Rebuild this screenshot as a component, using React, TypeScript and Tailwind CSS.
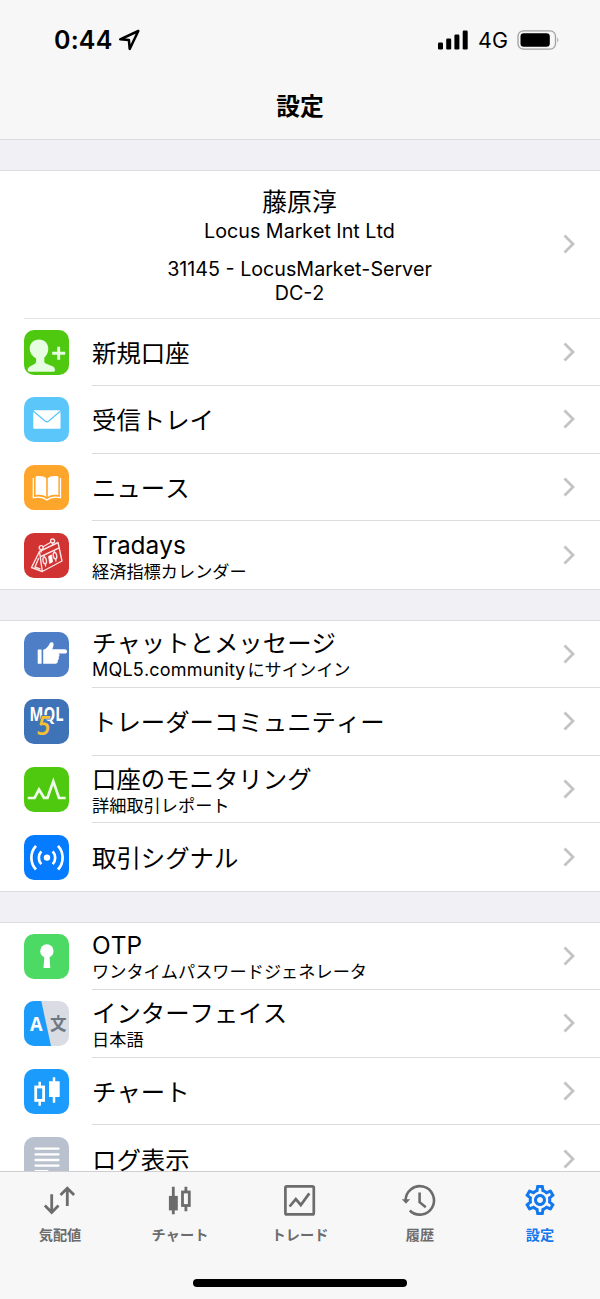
import type { ReactNode } from "react";
import { MdOutlineSettings } from "react-icons/md";

type Item = {
  title: string;
  subtitle?: ReactNode;
  icon: ReactNode;
};

const accountItems: Item[] = [
  { title: "新規口座", icon: <NewAccountIcon /> },
  { title: "受信トレイ", icon: <MailIcon /> },
  { title: "ニュース", icon: <NewsIcon /> },
  { title: "Tradays", subtitle: "経済指標カレンダー", icon: <TradaysIcon /> },
];

const communityItems: Item[] = [
  {
    title: "チャットとメッセージ",
    subtitle: (
      <>
        <span className="mr-[2px] text-[18px] tracking-[0.2px]">MQL5.community</span>
        にサインイン
      </>
    ),
    icon: <ChatIcon />,
  },
  { title: "トレーダーコミュニティー", icon: <MqlIcon /> },
  { title: "口座のモニタリング", subtitle: "詳細取引レポート", icon: <MonitorIcon /> },
  { title: "取引シグナル", icon: <SignalIcon /> },
];

const appItems: Item[] = [
  { title: "OTP", subtitle: "ワンタイムパスワードジェネレータ", icon: <OtpIcon /> },
  { title: "インターフェイス", subtitle: "日本語", icon: <LanguageIcon /> },
  { title: "チャート", icon: <ChartIcon /> },
  { title: "ログ表示", icon: <LogIcon /> },
];

function Tile({ className, children }: { className: string; children: ReactNode }) {
  return (
    <svg
      viewBox="0 0 45 45"
      className={`h-[45px] w-[45px] shrink-0 rounded-[10px] ${className}`}
      fill="none"
    >
      {children}
    </svg>
  );
}

function NewAccountIcon() {
  return (
    <Tile className="bg-[#4fc90f]">
      <path
        d="M15 9.6c5.400 0 9.300 3.900 9.300 9 0 3.700-1.500 6.900-4 9.200v3.400c0 1.400.9 2.200 2.600 2.900l5 2c2 .8 3.100 2 3.100 4.200 0 .9-.6 1.400-1.500 1.400H5.300c-1 0-1.600-.5-1.600-1.400 0-2.200 1.100-3.400 3.100-4.300l3.300-1.700c1.400-.7 2-1.400 2-2.700V28.600c-4-2.400-6.400-5.800-6.400-10 0-5.100 3.900-9 9.300-9z"
        fill="#e6fde2"
      />
      <path d="M34.700 16.800v13M28.200 23.300h13" stroke="#e6fde2" strokeWidth="2.900" />
    </Tile>
  );
}

function MailIcon() {
  return (
    <Tile className="bg-[#5ac6fa]">
      <rect x="9.300" y="13.300" width="27.200" height="18.400" rx="0.800" fill="#fff" />
      <path
        d="M9 13.800l12 10.300q1.900 1.500 3.800 0L36.800 13.800"
        stroke="#5ac6fa"
        strokeWidth="1.300"
      />
    </Tile>
  );
}

function NewsIcon() {
  return (
    <Tile className="bg-[#fea62b]">
      <path
        d="M11.600 11.500c4.500-1 8.300-.2 10.600 1.700v18.500c-2.500-2-6.300-2.500-10.600-1.600zM34.400 11.500c-4.500-1-8.300-.2-10.600 1.700v18.500c2.500-2 6.300-2.500 10.600-1.600z"
        fill="#fff"
      />
      <path
        d="M9.300 13v19.700c5-1 10-.6 13.600 2.300 3.600-2.900 8.600-3.300 13.600-2.300V13"
        stroke="#fff"
        strokeWidth="1.300"
      />
    </Tile>
  );
}

function TradaysIcon() {
  return (
    <Tile className="bg-[#d13232]">
      <g stroke="#fbe3e3" strokeWidth="1.400" strokeLinejoin="round" strokeLinecap="round">
        <path d="M15.500 18.500L34 9.500l4 18.500-19.700 10.500z" />
        <path d="M15.500 18.500L7.500 34.500l10.800 4M17 23.500l18.200-8.700M14.500 25.500l-3.500 8.500 5 1.800" />
        <circle cx="17.200" cy="14.600" r="2" />
        <circle cx="28.600" cy="8" r="2" />
        <path d="M17.200 16.600v2.500M19.500 13.500l6.800-4M28.600 10v2.200" />
        <ellipse cx="20.700" cy="27.600" rx="1.700" ry="3.300" transform="rotate(-10 20.700 27.600)" />
        <ellipse cx="31" cy="22.700" rx="1.700" ry="3.300" transform="rotate(-10 31 22.700)" />
        <path d="M20 22.800l.3 1.500M21.300 31l.3 2M30.300 18l.3 1.400M31.600 26l.3 2" />
      </g>
      <path d="M24.600 23.300l2.900-1.400 1 7-2.900 1.500z" fill="#fff" stroke="#fff" strokeWidth="0.800" />
    </Tile>
  );
}

function ChatIcon() {
  return (
    <Tile className="bg-[#4d7ec6]">
      <rect x="13.700" y="17.400" width="3.900" height="14.400" rx="0.500" fill="#fff" />
      <path
        d="M19.200 17.700c3-1 4.900-2.900 6.200-5.800.7-1.600 1.700-2 2.800-1.600 1.500.6 1.700 2 1.200 3.700l-1.100 3.200h12.600c1.300 0 2.200 1 2.200 2.200 0 1.300-.9 2.200-2.200 2.200h-6.300c1.300.8 1.300 2.700-.1 3.300.8 1 .5 2.600-.7 3.100.5 1.800-.5 3.800-2.700 3.800H19.200z"
        fill="#fff"
      />
    </Tile>
  );
}

function MqlIcon() {
  return (
    <Tile className="bg-[#3f73b7]">
      <text
        x="5.500"
        y="22"
        textLength="34"
        lengthAdjust="spacingAndGlyphs"
        className="font-['Open_Sans',sans-serif] text-[19px] font-bold"
        fill="#fff"
      >
        MQL
      </text>
      <text
        x="13"
        y="35.600"
        className="font-['Open_Sans',sans-serif] text-[27px] font-semibold italic"
        fill="#f5c12f"
        stroke="#3f73b7"
        strokeWidth="1.600"
        paintOrder="stroke"
        textLength="13.500"
        lengthAdjust="spacingAndGlyphs"
      >
        5
      </text>
    </Tile>
  );
}

function MonitorIcon() {
  return (
    <Tile className="bg-[#4fc90f]">
      <path
        d="M3.700 31h6.800L15 22.500l5 8.300h3.500l5.800-16.500L35 31h6.700"
        stroke="#effde8"
        strokeWidth="2.700"
      />
    </Tile>
  );
}

function SignalIcon() {
  return (
    <Tile className="bg-[#057bff]">
      <circle cx="23" cy="22.600" r="3.200" fill="#fff" />
      <path
        d="M17.300 16.300a9.500 9.500 0 0 0 0 12.800M28.700 16.300a9.500 9.500 0 0 1 0 12.800M12 10.800a17.500 17.500 0 0 0 0 23.700M34 10.800a17.500 17.500 0 0 1 0 23.700"
        stroke="#fff"
        strokeWidth="2.700"
      />
    </Tile>
  );
}

function OtpIcon() {
  return (
    <Tile className="bg-[#4cd964]">
      <circle cx="22.900" cy="16.900" r="6.700" fill="#fff" />
      <path d="M20.400 21h5l.9 13.100h-6.800z" fill="#fff" />
    </Tile>
  );
}

function LanguageIcon() {
  return (
    <Tile className="bg-[#d9dce3]">
      <path d="M0 0h17.300L27 45H0z" fill="#1b9cfb" />
      <text
        x="5.900"
        y="30.200"
        textLength="12.600"
        lengthAdjust="spacingAndGlyphs"
        className="font-['Open_Sans',sans-serif] text-[20px] font-bold"
        fill="#fff"
      >
        A
      </text>
      <text
        x="34.300"
        y="28.600"
        textAnchor="middle"
        className="font-['Noto_Sans_CJK_JP',sans-serif] text-[16.500px] font-bold"
        fill="#6c7883"
      >
        文
      </text>
    </Tile>
  );
}

function ChartIcon() {
  return (
    <Tile className="bg-[#1b9bfc]">
      <rect x="11.700" y="18" width="7.900" height="13.400" stroke="#fff" strokeWidth="2.800" />
      <path d="M15.700 12.700v5M15.700 31.700v5M30 8.300v25.400" stroke="#fff" strokeWidth="2.500" />
      <rect x="25" y="12.300" width="10.700" height="15.700" rx="0.500" fill="#fff" />
    </Tile>
  );
}

function LogIcon() {
  return (
    <Tile className="bg-[#b9c1cf]">
      <path
        d="M11.500 11.700h23M11.500 17.400h23M11.500 23h23M11.500 28.600h23M11.500 34.200h12"
        stroke="#fff"
        strokeWidth="2.300"
        strokeLinecap="round"
      />
    </Tile>
  );
}

function Chevron() {
  return (
    <svg viewBox="0 0 12 20" className="mr-[25px] h-5 w-3 shrink-0" fill="none">
      <path d="M1.500 1.500L10 10l-8.500 8.500" stroke="#c3c3c6" strokeWidth="2.800" />
    </svg>
  );
}

function Row({ item, last }: { item: Item; last: boolean }) {
  return (
    <li className="flex h-[67.6px] items-center pl-6">
      {item.icon}
      <div
        className={`ml-[23px] flex h-full min-w-0 flex-1 items-center justify-between ${
          last ? "" : "border-b border-[#dcdcde]"
        }`}
      >
        <div className={item.subtitle ? "pt-[5px]" : "pt-[3px]"}>
          <p className="text-[24.4px] leading-[27px] whitespace-nowrap">{item.title}</p>
          {item.subtitle && (
            <p className="text-[17.2px] leading-[25px] whitespace-nowrap">{item.subtitle}</p>
          )}
        </div>
        <Chevron />
      </div>
    </li>
  );
}

function Group({ items }: { items: Item[] }) {
  return (
    <ul className="bg-white">
      {items.map((item, i) => (
        <Row key={item.title} item={item} last={i === items.length - 1} />
      ))}
    </ul>
  );
}

function Gap() {
  return <div className="h-[31.6px] border-y border-[#dcdce0] bg-[#f0f0f5]" />;
}

function StatusBar() {
  return (
    <div className="flex h-20 items-center justify-between pr-[40px] pl-[54px]">
      <div className="flex items-center gap-[5px]">
        <span className="text-[25px] leading-none font-semibold tracking-[0.2px]">0:44</span>
        <svg viewBox="0 0 22 22" className="h-[22px] w-[22px]" fill="none">
          <path
            d="M20.300 2L2.200 10.300l8.700.8.800 8.900z"
            stroke="#000"
            strokeWidth="2.500"
            strokeLinejoin="round"
          />
        </svg>
      </div>
      <div className="flex items-center">
        <svg viewBox="0 0 30 20" className="h-5 w-[30px]">
          <rect x="0" y="12.500" width="5" height="7" rx="1.300" />
          <rect x="8.200" y="8.500" width="5" height="11" rx="1.300" />
          <rect x="16.400" y="4.500" width="5" height="15" rx="1.300" />
          <rect x="24.700" y="0.500" width="5" height="19" rx="1.300" />
        </svg>
        <span className="ml-[10px] pt-[2px] text-[21.5px] leading-none">4G</span>
        <svg viewBox="0 0 43 20" className="ml-[9px] h-5 w-[43px]" fill="none">
          <rect x="1" y="0.800" width="37.500" height="18.400" rx="5.500" stroke="#a0a0a0" strokeWidth="1.300" />
          <rect x="3.500" y="3.200" width="29.300" height="13.600" rx="3.300" fill="#000" />
          <path d="M40.300 7.300q2 2.700 0 5.400z" fill="#a0a0a0" />
        </svg>
      </div>
    </div>
  );
}

function QuotesTab() {
  return (
    <path
      d="M11.700 14.300V32M4.900 25.600l6.800 6.800 6.800-6.800M27.300 26V8.500M20.500 15l6.800-6.800 6.800 6.800"
      stroke="currentColor"
      strokeWidth="2.800"
    />
  );
}

function ChartTab() {
  return (
    <g stroke="currentColor" strokeWidth="2.800">
      <rect x="10.300" y="17.300" width="6.100" height="11.700" fill="currentColor" />
      <path d="M13.300 6.700V34.300M25.900 6.700v5M25.900 26v5.300" />
      <rect x="22.500" y="12" width="6.800" height="13.500" />
    </g>
  );
}

function TradeTab() {
  return (
    <g stroke="currentColor" strokeWidth="2.700">
      <rect x="5.400" y="6.400" width="28.400" height="28" rx="1.500" />
      <path d="M9.600 26.500l6.200-7.300 5 5.800 8.500-11.600" />
    </g>
  );
}

function HistoryTab() {
  return (
    <>
      <path d="M5.600 21a14.200 14.200 0 1 1 4.200 9.500" stroke="currentColor" strokeWidth="2.600" />
      <path d="M1.800 19.200h8.300l-4.100 4.600z" fill="currentColor" />
      <path d="M19.600 12.500v9.700l6.200 5" stroke="currentColor" strokeWidth="2.600" />
    </>
  );
}

const tabs = [
  { label: "気配値", icon: <QuotesTab /> },
  { label: "チャート", icon: <ChartTab /> },
  { label: "トレード", icon: <TradeTab /> },
  { label: "履歴", icon: <HistoryTab /> },
];

export default function App() {
  return (
    <div className="flex h-[1299px] w-[600px] flex-col overflow-hidden bg-white font-['Inter','Noto_Sans_CJK_JP',sans-serif] text-black [font-kerning:none]">
      <header className="h-[139.2px] shrink-0 bg-[#f7f7f7]">
        <StatusBar />
        <h1 className="pt-[12px] text-center text-[23.8px] leading-[30px] font-bold">設定</h1>
      </header>

      <main className="min-h-0 flex-1 overflow-hidden">
        <Gap />
        <section className="flex h-[147.8px] pl-6">
          <div className="flex flex-1 items-center border-b border-[#e4e4e6]">
            <div className="flex-1 pt-[4px] pl-[12px] text-center text-[19.7px] leading-6">
              <p className="text-[24.8px] leading-[30px]">藤原淳</p>
              <p className="pt-[2px] pb-[14px]">Locus Market Int Ltd</p>
              <p>31145 - LocusMarket-Server</p>
              <p>DC-2</p>
            </div>
            <Chevron />
          </div>
        </section>
        <Group items={accountItems} />
        <Gap />
        <Group items={communityItems} />
        <Gap />
        <Group items={appItems} />
      </main>

      <nav className="flex h-[128px] shrink-0 flex-col justify-between border-t border-[#cfcfd1] bg-[#f7f7f7] pb-[12px]">
        <div className="grid grid-cols-5 pt-[8px] text-[14.2px] leading-5 font-bold text-[#6c6c6c]">
          {tabs.map((tab) => (
            <div key={tab.label} className="flex flex-col items-center gap-[5px]">
              <svg viewBox="0 0 40 40" className="h-10 w-10" fill="none">
                {tab.icon}
              </svg>
              <span>{tab.label}</span>
            </div>
          ))}
          <div className="flex flex-col items-center gap-[5px] text-[#1377ee]">
            <span className="flex h-10 w-10 items-center justify-center">
              <MdOutlineSettings className="h-9 w-9" />
            </span>
            <span>設定</span>
          </div>
        </div>
        <div className="h-2 w-[214px] self-center rounded-full bg-black" />
      </nav>
    </div>
  );
}
